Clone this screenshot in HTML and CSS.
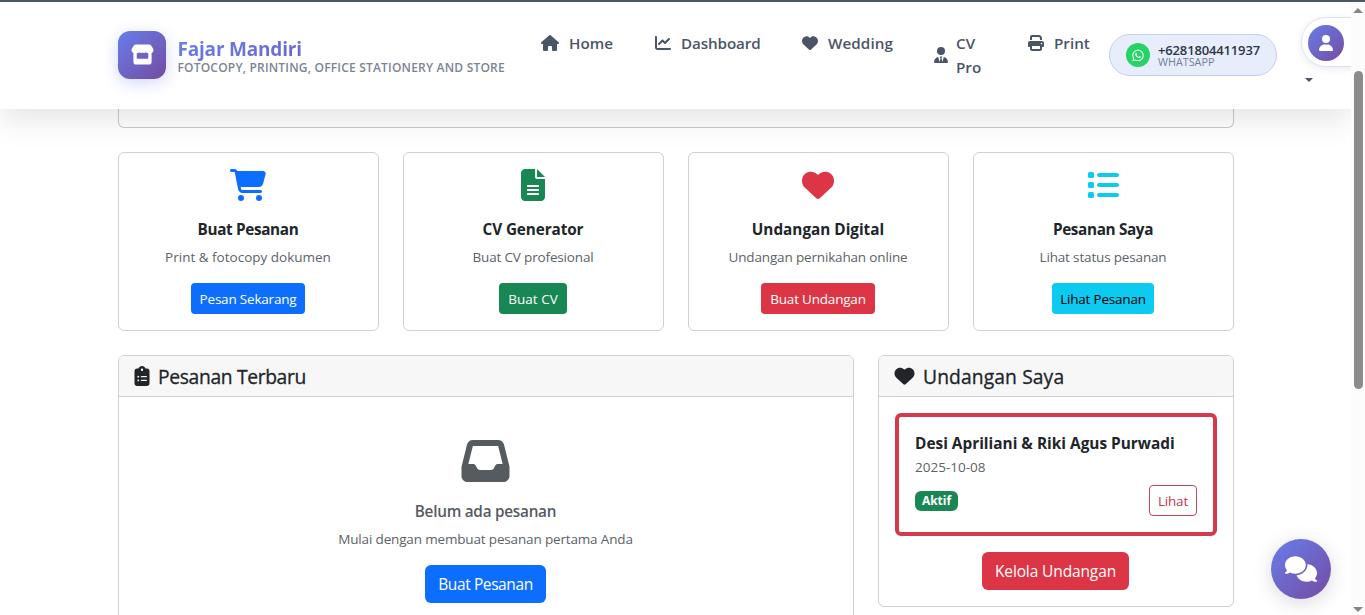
FILE: index.html
```html
<!DOCTYPE html>
<html lang="id">
<head>
<meta charset="utf-8">
<title>Fajar Mandiri</title>
<link rel="stylesheet" href="styles.css">
</head>
<body>
<svg class="sprite" aria-hidden="true">
  <symbol id="store" viewBox="0 0 24 21"><path fill-rule="evenodd" d="M5 0H19Q20.300 0 21 1.100L23 4.300Q24.200 6.800 22.300 8.400L21.500 8.900V18Q21.500 21 18.500 21H5.500Q2.500 21 2.500 18V8.900L1.700 8.400Q-.2 6.800 1 4.300L3 1.100Q3.700 0 5 0ZM6 9.200V14.200Q6 15 6.800 15H17.200Q18 15 18 14.200V9.200Q16.500 9 15.600 8.200Q13.800 9.800 12 8.300Q10.200 9.800 8.400 8.200Q7.500 9 6 9.200Z"/></symbol>
  <symbol id="home" viewBox="0 0 576 512"><path d="M575.8 255.5c0 18-15 32.1-32 32.1h-32l.7 160.2c0 2.7-.2 5.4-.5 8.1V472c0 22.1-17.9 40-40 40H392c-22.1 0-40-17.9-40-40V384c0-17.7-14.3-32-32-32H256c-17.7 0-32 14.3-32 32v88c0 22.1-17.9 40-40 40H104c-22.1 0-40-17.9-40-40V287.6H32c-18 0-32-14-32-32.1c0-9 3-17 10-24L266.4 8c7-7 15-8 22-8s15 2 21 7L564.8 231.5c8 7 12 15 11 24z"/></symbol>
  <symbol id="chart" viewBox="0 0 512 512"><path d="M64 64c0-17.7-14.3-32-32-32S0 46.3 0 64V400c0 44.2 35.8 80 80 80H480c17.7 0 32-14.3 32-32s-14.3-32-32-32H80c-8.8 0-16-7.2-16-16V64zm406.6 86.6c12.5-12.5 12.5-32.8 0-45.3s-32.8-12.5-45.3 0L320 210.7l-57.4-57.4c-12.5-12.5-32.8-12.5-45.3 0l-112 112c-12.5 12.5-12.5 32.8 0 45.3s32.8 12.5 45.3 0L240 221.3l57.4 57.4c12.5 12.5 32.8 12.5 45.3 0l128-128z"/></symbol>
  <symbol id="heart" viewBox="0 0 512 512"><path d="M47.6 300.4L228.3 469.1c7.5 7 17.4 10.9 27.7 10.9s20.2-3.9 27.7-10.9L464.4 300.4c30.4-28.3 47.6-68 47.6-109.5v-5.8c0-69.9-50.5-129.5-119.4-141C347 36.5 300.6 51.4 268 84L256 96 244 84c-32.6-32.6-79-47.5-124.6-39.9C50.5 55.6 0 115.2 0 185.1v5.8c0 41.5 17.2 81.2 47.6 109.5z"/></symbol>
  <symbol id="user-tie" viewBox="0 0 448 512"><path d="M224 256A128 128 0 1 1 224 0a128 128 0 1 1 0 256zM209.1 359.2l-18.6-31c-6.4-10.7 1.3-24.2 13.7-24.2H224h19.7c12.4 0 20.1 13.6 13.7 24.2l-18.6 31 33.4 123.9 39.5-161.2c77.2 12 136.3 78.8 136.3 159.4c0 17-13.8 30.7-30.7 30.7H30.7C13.8 512 0 498.2 0 481.3c0-80.6 59.1-147.4 136.3-159.4l39.5 161.2 33.4-123.9z"/></symbol>
  <symbol id="print" viewBox="0 0 512 512"><path d="M128 0C92.7 0 64 28.7 64 64v96h64V64H354.7L384 93.3V160h64V93.3c0-17-6.7-33.3-18.7-45.3L400 18.7C388 6.7 371.7 0 354.7 0H128zM384 352v96H128V352H384zm64 32h32c17.7 0 32-14.3 32-32V256c0-35.3-28.7-64-64-64H64c-35.3 0-64 28.7-64 64v96c0 17.7 14.3 32 32 32H64v64c0 35.3 28.7 64 64 64H384c35.3 0 64-28.7 64-64V384zM432 248a24 24 0 1 1 0 48 24 24 0 1 1 0-48z"/></symbol>
  <symbol id="whatsapp" viewBox="0 0 448 512"><path d="M380.9 97.1C339 55.1 283.2 32 223.9 32c-122.4 0-222 99.6-222 222 0 39.1 10.2 77.3 29.6 111L0 480l117.7-30.9c32.4 17.7 68.9 27 106.1 27h.1c122.3 0 224.1-99.6 224.1-222 0-59.3-25.2-115-67.1-157zm-157 341.6c-33.2 0-65.7-8.9-94-25.7l-6.7-4-69.8 18.3L72 359.2l-4.4-7c-18.5-29.4-28.2-63.3-28.2-98.2 0-101.7 82.8-184.5 184.6-184.5 49.3 0 95.6 19.2 130.4 54.1 34.8 34.9 56.2 81.2 56.1 130.5 0 101.8-84.9 184.6-186.6 184.6zm101.2-138.2c-5.5-2.8-32.8-16.2-37.9-18-5.1-1.9-8.8-2.8-12.5 2.8-3.7 5.6-14.3 18-17.6 21.8-3.2 3.7-6.5 4.2-12 1.4-32.6-16.3-54-29.1-75.5-66-5.7-9.8 5.7-9.1 16.3-30.3 1.8-3.7.9-6.9-.5-9.7-1.4-2.8-12.5-30.1-17.1-41.2-4.5-10.8-9.1-9.3-12.5-9.5-3.2-.2-6.9-.2-10.6-.2-3.7 0-9.7 1.4-14.8 6.9-5.1 5.6-19.4 19-19.4 46.3 0 27.3 19.9 53.7 22.6 57.4 2.8 3.7 39.1 59.7 94.8 83.8 35.2 15.2 49 16.5 66.6 13.9 10.7-1.6 32.8-13.4 37.4-26.4 4.6-13 4.6-24.1 3.2-26.4-1.3-2.5-5-3.9-10.5-6.6z"/></symbol>
  <symbol id="user" viewBox="0 0 448 512"><path d="M224 256A128 128 0 1 0 224 0a128 128 0 1 0 0 256zm-45.7 48C79.8 304 0 383.8 0 482.3C0 498.7 13.3 512 29.7 512H418.3c16.4 0 29.7-13.3 29.7-29.7C448 383.8 368.2 304 269.7 304H178.3z"/></symbol>
  <symbol id="cart" viewBox="0 0 576 512"><path d="M0 24C0 10.7 10.7 0 24 0H69.5c22 0 41.5 12.8 50.6 32h411c26.3 0 45.5 25 38.6 50.4l-41 152.3c-8.5 31.4-37 53.3-69.5 53.3H170.7l5.4 28.5c2.2 11.3 12.1 19.5 23.6 19.5H488c13.3 0 24 10.7 24 24s-10.7 24-24 24H199.7c-34.6 0-64.3-24.6-70.7-58.5L77.4 54.5c-.7-3.8-4-6.5-7.9-6.5H24C10.7 48 0 37.3 0 24zM128 464a48 48 0 1 1 96 0 48 48 0 1 1 -96 0zm336-48a48 48 0 1 1 0 96 48 48 0 1 1 0-96z"/></symbol>
  <symbol id="file" viewBox="0 0 384 512"><path d="M64 0C28.7 0 0 28.7 0 64V448c0 35.3 28.7 64 64 64H320c35.3 0 64-28.7 64-64V160H256c-17.7 0-32-14.3-32-32V0H64zM256 0V128H384L256 0zM112 256H272c8.8 0 16 7.2 16 16s-7.2 16-16 16H112c-8.8 0-16-7.2-16-16s7.2-16 16-16zm0 64H272c8.8 0 16 7.2 16 16s-7.2 16-16 16H112c-8.8 0-16-7.2-16-16s7.2-16 16-16zm0 64H272c8.8 0 16 7.2 16 16s-7.2 16-16 16H112c-8.8 0-16-7.2-16-16s7.2-16 16-16z"/></symbol>
  <symbol id="list" viewBox="0 0 512 512"><rect x="16" y="48" width="96" height="96" rx="24"/><rect x="16" y="208" width="96" height="96" rx="24"/><rect x="16" y="368" width="96" height="96" rx="24"/><rect x="160" y="64" width="352" height="64" rx="32"/><rect x="160" y="224" width="352" height="64" rx="32"/><rect x="160" y="384" width="352" height="64" rx="32"/></symbol>
  <symbol id="clipboard" viewBox="0 0 384 512"><path d="M192 0c-41.8 0-77.4 26.7-90.5 64H64C28.7 64 0 92.7 0 128V448c0 35.3 28.7 64 64 64H320c35.3 0 64-28.7 64-64V128c0-35.3-28.7-64-64-64H282.5C269.4 26.7 233.8 0 192 0zm0 64a32 32 0 1 1 0 64 32 32 0 1 1 0-64zM72 272a24 24 0 1 1 48 0 24 24 0 1 1 -48 0zm104-16H304c8.8 0 16 7.2 16 16s-7.2 16-16 16H176c-8.8 0-16-7.2-16-16s7.2-16 16-16zM72 368a24 24 0 1 1 48 0 24 24 0 1 1 -48 0zm88 0c0-8.8 7.2-16 16-16H304c8.8 0 16 7.2 16 16s-7.2 16-16 16H176c-8.8 0-16-7.2-16-16z" fill-rule="evenodd"/></symbol>
  <symbol id="inbox" viewBox="0 0 512 512"><path d="M121 32C91.6 32 66 52 58.9 80.5L1.9 308.4C.6 313.5 0 318.7 0 323.9V416c0 35.3 28.7 64 64 64H448c35.3 0 64-28.7 64-64V323.9c0-5.2-.6-10.4-1.9-15.5l-57-227.9C446 52 420.4 32 391 32H121zm0 64H391l48 192H387.8c-12.1 0-23.2 6.8-28.6 17.7l-14.3 28.6c-5.4 10.8-16.5 17.7-28.6 17.7H195.8c-12.1 0-23.2-6.8-28.6-17.7l-14.3-28.6c-5.4-10.8-16.5-17.7-28.6-17.7H73L121 96z"/></symbol>
  <symbol id="comments" viewBox="0 0 640 512"><path d="M208 352c114.9 0 208-78.8 208-176S322.9 0 208 0S0 78.8 0 176c0 38.6 14.7 74.3 39.6 103.4c-3.5 9.4-8.7 17.7-14.2 24.7c-4.8 6.2-9.7 11-13.3 14.3c-1.8 1.6-3.3 2.9-4.3 3.7c-.5 .4-.9 .7-1.1 .8l-.2 .2C1 327.2-1.4 334.4 .8 340.9S9.1 352 16 352c21.8 0 43.8-5.6 62.1-12.5c9.2-3.5 17.8-7.4 25.2-11.4C134.1 343.3 169.8 352 208 352zM448 176c0 112.3-99.1 196.9-216.5 207C255.8 457.4 336.4 512 432 512c38.2 0 73.9-8.7 104.7-23.9c7.5 4 16 7.9 25.2 11.4c18.3 6.9 40.3 12.5 62.1 12.5c6.9 0 13.1-4.5 15.2-11.1c2.1-6.6-.2-13.8-5.8-17.9l-.2-.2c-.2-.2-.6-.4-1.1-.8c-1-.8-2.5-2-4.3-3.7c-3.6-3.3-8.5-8.1-13.3-14.3c-5.5-7-10.7-15.4-14.2-24.7c24.9-29 39.6-64.7 39.6-103.4c0-92.8-84.9-168.9-192.6-175.5c.4 5.1 .6 10.3 .6 15.5z"/></symbol>
</svg>

<div class="screen">
  <div class="viewport">
    <header class="navbar">
      <a class="brand">
        <span class="brand-logo"><svg><use href="#store"/></svg></span>
        <span class="brand-text"><span class="brand-name">Fajar Mandiri</span><span class="brand-tag">FOTOCOPY, PRINTING, OFFICE STATIONERY AND STORE</span></span>
      </a>
      <nav class="menu">
        <a class="link home"><svg><use href="#home"/></svg><span>Home</span></a>
        <a class="link dash"><svg><use href="#chart"/></svg><span>Dashboard</span></a>
        <a class="link wed"><svg><use href="#heart"/></svg><span>Wedding</span></a>
        <a class="link cv"><svg><use href="#user-tie"/></svg><span>CV<br>Pro</span></a>
        <a class="link prn"><svg><use href="#print"/></svg><span>Print</span></a>
      </nav>
      <a class="contact">
        <span class="wa"><svg><use href="#whatsapp"/></svg></span>
        <span class="contact-text"><b>+6281804411937</b><small>WHATSAPP</small></span>
      </a>
      <div class="account">
        <span class="account-pill"><span class="avatar"><svg><use href="#user"/></svg></span></span>
        <i class="caret"></i>
      </div>
    </header>

    <main class="content">
      <div class="welcome"></div>
      <section class="actions">
        <article class="card action">
          <svg class="ico blue wide"><use href="#cart"/></svg>
          <h6 class="tight">Buat Pesanan</h6><p class="open">Print &amp; fotocopy dokumen</p><a class="btn sm bg-blue w114">Pesan Sekarang</a>
        </article>
        <article class="card action">
          <svg class="ico green"><use href="#file"/></svg>
          <h6>CV Generator</h6><p>Buat CV profesional</p><a class="btn sm bg-green w68">Buat CV</a>
        </article>
        <article class="card action">
          <svg class="ico red"><use href="#heart"/></svg>
          <h6 class="open">Undangan Digital</h6><p>Undangan pernikahan online</p><a class="btn sm bg-red w114">Buat Undangan</a>
        </article>
        <article class="card action">
          <svg class="ico cyan"><use href="#list"/></svg>
          <h6 class="tight">Pesanan Saya</h6><p>Lihat status pesanan</p><a class="btn sm bg-cyan w102">Lihat Pesanan</a>
        </article>
      </section>
      <section class="panels">
        <article class="card orders">
          <div class="card-head"><svg class="clip"><use href="#clipboard"/></svg><h5 class="tight">Pesanan Terbaru</h5></div>
          <div class="empty">
            <svg><use href="#inbox"/></svg>
            <h6>Belum ada pesanan</h6><p>Mulai dengan membuat pesanan pertama Anda</p><a class="btn bg-blue w121">Buat Pesanan</a>
          </div>
        </article>
        <article class="card invites">
          <div class="card-head"><svg class="hrt"><use href="#heart"/></svg><h5>Undangan Saya</h5></div>
          <div class="invites-body">
            <div class="invite">
              <h6 class="open">Desi Apriliani &amp; Riki Agus Purwadi</h6>
              <p class="open">2025-10-08</p>
              <div class="invite-row"><span class="badge">Aktif</span><a class="btn sm outline">Lihat</a></div>
            </div>
            <a class="btn bg-red w147">Kelola Undangan</a>
          </div>
        </article>
      </section>
    </main>
    <a class="chat"><svg><use href="#comments"/></svg></a>
  </div>
  <div class="scrollbar"><i class="up"></i><i class="thumb"></i><i class="down"></i></div>
</div>
</body>
</html>
```
FILE: styles.css
```css
* { box-sizing: border-box; }
body { margin: 0; background: #fff; color: #212529; font: 400 16px/24px "Open Sans", "Noto Sans", sans-serif; overflow: hidden; }
.sprite { display: none; }
svg { fill: currentColor; display: block; flex: none; }
h5, h6, p { margin: 0; white-space: nowrap; }
.screen { display: flex; height: 615px; border-top: 2px solid #4b595e; overflow: hidden; }
.viewport { position: relative; width: 1351px; height: 613px; overflow: hidden; }

.navbar { position: relative; z-index: 2; display: flex; align-items: flex-start; height: 107px; padding-left: 118px; background: #fff; box-shadow: 0 8px 32px rgba(0,0,0,.12); color: #4a5568; }
.brand { display: flex; width: 423px; padding-top: 29px; gap: 12px; }
.brand-logo { display: grid; place-items: center; width: 48px; height: 48px; border-radius: 12px; background: linear-gradient(135deg,#667eea,#764ba2); box-shadow: 0 4px 15px rgba(102,126,234,.3); color: #fff; }
.brand-logo svg { width: 23px; height: 21px; margin-bottom: 1px; }
.brand-text { display: flex; flex-direction: column; align-items: flex-start; margin-left: -.5px; white-space: nowrap; }
.brand-name { margin-top: 5px; font-size: 19px; font-weight: 700; line-height: 26px; letter-spacing: -.2px; background: linear-gradient(135deg,#667eea,#764ba2); background-size: 327px 100%; -webkit-background-clip: text; background-clip: text; color: transparent; }
.brand-tag { margin-top: -2px; font-size: 12px; font-weight: 600; line-height: 15px; letter-spacing: .2px; color: #7b8494; }
.menu { display: flex; width: 568px; padding-top: 29px; font-size: 15.2px; font-weight: 600; }
.link { display: flex; align-items: flex-start; white-space: nowrap; }
.link svg { width: 16px; height: 16px; margin: 4px 10px 0 0; }
.home { width: 114px; }
.home svg { width: 18px; margin-right: 10px; }
.dash { width: 147px; letter-spacing: -.1px; }
.wed { width: 132px; letter-spacing: .1px; }
.cv { width: 94px; align-items: center; }
.cv svg { width: 14px; margin: 0 8px 0 0; }

.contact { display: flex; align-items: center; width: 168px; height: 42px; margin-top: 32px; padding-left: 16px; gap: 8px; border: 1px solid #c1cff5; border-radius: 21px; background: #e8edfc; white-space: nowrap; }
.wa { display: grid; place-items: center; width: 24px; height: 24px; border-radius: 50%; background: #25d366; color: #fff; }
.wa svg { width: 12px; height: 13px; }
.contact-text { display: flex; flex-direction: column; color: #2d3748; font-size: 13px; line-height: 14px; }
.contact-text b { font-weight: 600; letter-spacing: -.15px; }
.contact-text small { font-size: 10.8px; line-height: 10px; color: #718096; }
.account { width: 74px; padding: 15px 0 0 24px; overflow: hidden; }
.account-pill { display: flex; width: 80px; height: 50px; padding: 7px 6px; border: 1px solid #dce3f7; border-radius: 25px; background: #fff; box-shadow: 0 2px 8px rgba(0,0,0,.08); }
.avatar { display: grid; place-items: center; width: 36px; height: 36px; border-radius: 50%; background: linear-gradient(135deg,#667eea,#764ba2); color: #fff; }
.avatar svg { width: 14px; height: 16px; }
.caret { display: block; width: 0; height: 0; margin: 11px 0 0 4px; border: 4px solid transparent; border-top-color: #4a5568; border-bottom: 0; }

.content { display: flex; flex-direction: column; width: 1116px; margin-left: 118px; gap: 24px; }
.welcome { height: 19px; border: 1px solid #c9cccf; border-top: 0; border-radius: 0 0 6px 6px; }
.card { border: 1px solid #cfd1d3; border-radius: 6px; background: #fff; }
.actions { display: grid; grid-template-columns: repeat(4, 261px); gap: 24px; }
.action { display: flex; flex-direction: column; align-items: center; height: 179px; padding: 16px 1px 0 0; }
.ico { width: 32px; height: 32px; }
.wide { width: 36px; }
.blue { color: #0d6efd; } .green { color: #198754; } .red { color: #dc3545; } .cyan { color: #0dcaf0; }
h6 { font-size: 15.3px; line-height: 20px; font-weight: 700; letter-spacing: -.1px; }
h6.tight { letter-spacing: -.35px; }
h6.open, p.open { letter-spacing: 0; }
.action h6 { margin-top: 18px; }
p { font-size: 13.5px; line-height: 21px; letter-spacing: -.16px; color: #5c6368; }
.action p { margin-top: 8px; }
.btn { display: flex; align-items: center; justify-content: center; height: 38px; border-radius: 6px; font-size: 15.5px; letter-spacing: -.2px; color: #fff; white-space: nowrap; }
.sm { height: 31px; border-radius: 4px; font-size: 13.5px; }
.action .btn { margin-top: 15px; }
.w68 { width: 68px; letter-spacing: 0; } .w102 { width: 102px; } .w114 { width: 114px; } .w121 { width: 121px; letter-spacing: -.4px; } .w147 { width: 147px; letter-spacing: -.12px; }
.bg-blue { background: #0d6efd; } .bg-green { background: #198754; } .bg-red { background: #dc3545; } .bg-cyan { background: #0dcaf0; color: #000; }

.panels { display: flex; align-items: flex-start; gap: 24px; }
.orders { width: 736px; height: 300px; }
.invites { width: 356px; height: 252px; }
.card-head { display: flex; align-items: center; height: 41px; padding: 0 16px 0 15px; border-bottom: 1px solid #cfd1d3; border-radius: 5px 5px 0 0; background: #f7f7f7; }
h5 { margin-top: 2px; font-size: 19.3px; line-height: 24px; font-weight: 500; letter-spacing: .1px; -webkit-text-stroke: .3px currentColor; }
h5.tight { letter-spacing: -.35px; }
.clip { width: 16px; height: 20px; margin-right: 8px; }
.hrt { width: 21px; height: 20px; margin-right: 8px; }
.empty { display: flex; flex-direction: column; align-items: center; padding: 40px 1px 0 0; color: #565b5f; }
.empty svg { width: 49px; height: 48px; }
.empty h6 { margin-top: 16px; font-weight: 600; letter-spacing: -.25px; }
.empty p { margin-top: 8px; }
.empty .btn { margin-top: 15px; }
.invites-body { display: flex; flex-direction: column; align-items: center; padding: 16px; }
.invite { width: 322px; height: 123px; padding: 17px 16px 0; border: 4px solid #d13b4b; border-radius: 6px; }
.invite h6 { font-size: 15.4px; }
.invite p { margin-top: 3px; }
.invite-row { display: flex; justify-content: space-between; align-items: center; margin-top: 7px; }
.badge { display: grid; place-items: center; width: 43px; height: 20px; border-radius: 6px; background: #198754; color: #fff; font-size: 12px; font-weight: 700; line-height: 12px; }
.outline { width: 48px; border: 1px solid #c5485a; color: #c5394a; }
.invites-body .w147 { margin: 16px 1px 0 0; }

.chat { position: absolute; right: 20px; bottom: 16px; display: grid; place-items: center; width: 60px; height: 60px; border-radius: 50%; background: linear-gradient(135deg,#667eea,#764ba2); box-shadow: 0 4px 20px rgba(0,0,0,.15); color: #fff; }
.chat svg { width: 32px; height: 26px; }
.scrollbar { display: flex; flex-direction: column; align-items: center; width: 14px; background: #fcfcfc; }
.up, .down { border: 5px solid transparent; border-bottom: 5px solid #858585; border-top: 0; margin-top: 6px; }
.thumb { width: 9px; height: 318px; margin-top: 58px; border-radius: 5px; background: #8b8b8b; }
.down { margin-top: auto; margin-bottom: 3px; border-top: 5px solid #858585; border-bottom: 0; }
```
